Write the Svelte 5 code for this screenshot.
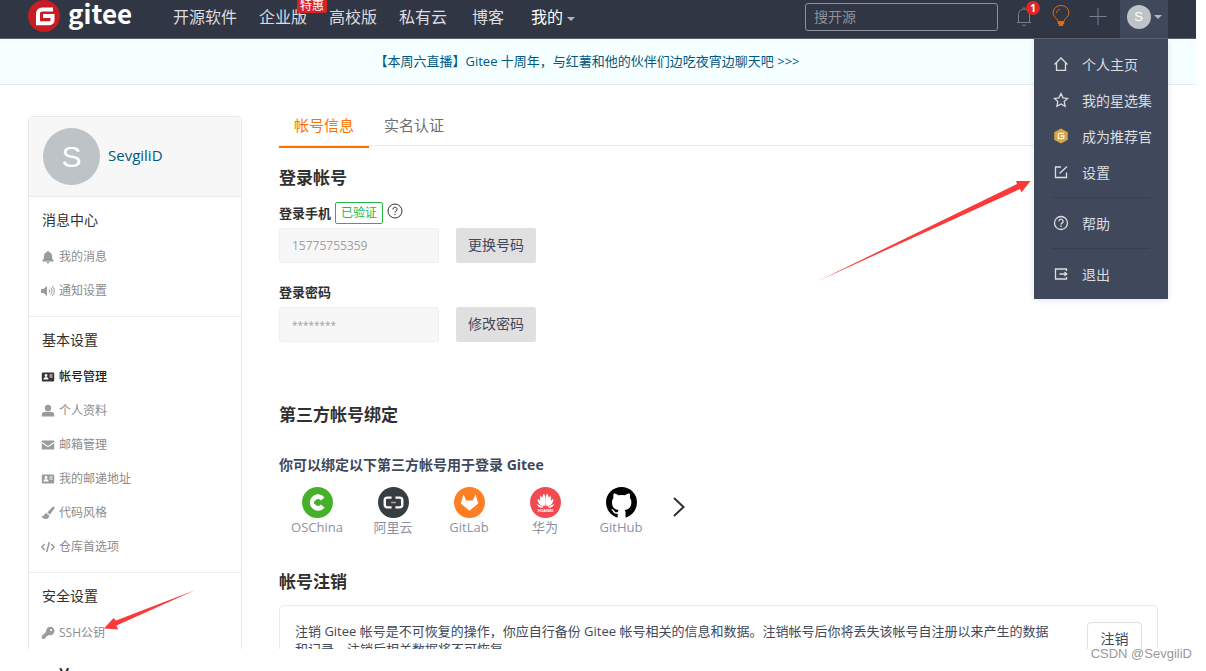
<script lang="ts">
	let keyword = $state('');
	let menuOpen = $state(true);

	const navLinks = [
		{ text: '开源软件' },
		{ text: '企业版', tag: '特惠' },
		{ text: '高校版' },
		{ text: '私有云' }
	];

	const sections = [
		{
			title: '消息中心',
			items: [
				{ icon: 'bell', text: '我的消息' },
				{ icon: 'volume', text: '通知设置' }
			]
		},
		{
			title: '基本设置',
			items: [
				{ icon: 'card', text: '帐号管理', active: true },
				{ icon: 'user', text: '个人资料' },
				{ icon: 'mail', text: '邮箱管理' },
				{ icon: 'card', text: '我的邮递地址' },
				{ icon: 'brush', text: '代码风格' },
				{ icon: 'code', text: '仓库首选项' }
			]
		},
		{
			title: '安全设置',
			items: [{ icon: 'key', text: 'SSH公钥', arrow: true }]
		}
	];

	const menuGroups = [
		[
			{ icon: 'home', text: '个人主页' },
			{ icon: 'star', text: '我的星选集' },
			{ icon: 'medal', text: '成为推荐官' },
			{ icon: 'edit', text: '设置' }
		],
		[{ icon: 'help', text: '帮助' }],
		[{ icon: 'exit', text: '退出' }]
	];

	const providers = ['OSChina', '阿里云', 'GitLab', '华为', 'GitHub'];
</script>

{#snippet sideIcon(name: string)}
	<svg class="side-icon" viewBox="0 0 14 14" aria-hidden="true">
		{#if name === 'bell'}
			<path d="M7 1c.6 0 .9.4.9.9C10 2.300 11 4 11 6c0 2.500.6 3.500 1.500 4.300.4.400.2 1.200-.5 1.200H2c-.7 0-.9-.8-.5-1.200C2.400 9.500 3 8.500 3 6c0-2 1-3.700 3.100-4.100C6.100 1.400 6.400 1 7 1zM5.500 12h3a1.500 1.500 0 0 1-3 0z" />
		{:else if name === 'volume'}
			<path d="M0 5h2.500L6 2v10L2.500 9H0z" />
			<path class="line" d="M8 5.300a2.500 2.500 0 0 1 0 3.400M9.500 3.500a5 5 0 0 1 0 7M11.200 2a7 7 0 0 1 0 10" />
		{:else if name === 'card'}
			<path fill-rule="evenodd" d="M2 2.500h10a1.200 1.200 0 0 1 1.200 1.200v6.600a1.200 1.200 0 0 1-1.200 1.200H2A1.200 1.200 0 0 1 .8 10.300V3.700A1.200 1.200 0 0 1 2 2.500zM5 4a1.400 1.400 0 1 0 0 2.900A1.400 1.400 0 0 0 5 4zM2.500 9.500h5c0-1.600-.8-2.200-2.500-2.200s-2.500.6-2.500 2.200zM8.500 4.500v1h3v-1zM8.500 6.500v1h3v-1z" />
		{:else if name === 'user'}
			<circle cx="7" cy="4" r="3.200" />
			<path d="M.8 12.500V11c0-2 1.300-3.200 3.400-3.200h5.600c2.100 0 3.400 1.200 3.400 3.200v1.500z" />
		{:else if name === 'mail'}
			<path d="M.8 2.500h12.400v1.300L7 8 .8 3.800z" />
			<path d="M.8 5.200 7 9.300l6.200-4.100v6.300H.8z" />
		{:else if name === 'brush'}
			<path d="M13.200.8c.7.6.3 1.500-.1 2.200L9 8.500 6.300 6.400 11.200 1.200c.6-.6 1.400-.9 2-.4zM5.500 7.200l2.700 2.200c.2 2.200-1.200 3.600-3.600 3.600C2 13 .8 11.500.8 9.500c1 .8 1.800.7 2.300-.5.500-1.200 1.300-1.800 2.400-1.800z" />
		{:else if name === 'code'}
			<path class="line thick" d="M3.800 4 .8 7l3 3M10.200 4l3 3-3 3M8.300 2 5.700 12" />
		{:else}
			<path fill-rule="evenodd" d="M9 .8a4.200 4.200 0 1 1-1.300 8.100L6.600 10H5.400v1.200H4.200v1.500H.8V10l4.300-4.300A4.200 4.200 0 0 1 9 .8zM10 3a1.100 1.100 0 1 0 0 2.200A1.100 1.100 0 0 0 10 3z" />
		{/if}
	</svg>
{/snippet}

{#snippet menuIcon(name: string)}
	<svg class="menu-icon" viewBox="0 0 16 16" aria-hidden="true">
		{#if name === 'home'}
			<path d="M1.500 8.500 8 2l6.500 6.500M3.500 7v7.300h9V7" />
		{:else if name === 'star'}
			<path d="M8 1.500l2 4.300 4.700.6-3.500 3.200.9 4.700L8 12l-4.100 2.300.9-4.700L1.300 6.400 6 5.800z" />
		{:else if name === 'medal'}
			<path class="gold" d="M8 .5 14.800 4.200v7.600L8 15.500 1.200 11.800V4.200z" />
			<path class="pale" d="M11 5.300H6.300a1 1 0 0 0-1 1v4.400h4.500a1 1 0 0 0 1-1V8H7.500" />
		{:else if name === 'edit'}
			<path d="M8 3H2.500v10.500h11V8.500M6.500 9.500l7.500-7" />
		{:else if name === 'help'}
			<circle cx="8" cy="8" r="6.500" />
			<path d="M5.900 6.300a2.100 2.100 0 1 1 3.200 1.800c-.8.500-1.100.8-1.100 1.500M8 10.600v1.400" />
		{:else}
			<path d="M13.500 5V3h-11v10h11v-2M6.500 8h7M11.500 6 13.800 8l-2.300 2" />
		{/if}
	</svg>
{/snippet}

<div class="page">
	<div class="frame">
		<header>
			<a class="brand" href="#home">
				<svg viewBox="0 0 32 32" aria-hidden="true">
					<circle cx="16" cy="16" r="16" />
					<path d="M25 9.500H14A4 4 0 0 0 10 13.500V23.300h11.500a3 3 0 0 0 3-3V16H15" />
				</svg>
				<span>gitee</span>
			</a>
			<nav class="main-nav">
				{#each navLinks as link}
					<a href="#nav">
						{link.text}
						{#if link.tag}<span class="tag">{link.tag}</span>{/if}
					</a>
				{/each}
				<a class="blog" href="#blog">博客</a>
				<a class="mine" href="#mine">我的<i class="caret"></i></a>
			</nav>
			<input class="search" type="text" placeholder="搜开源" aria-label="搜开源" bind:value={keyword} />
			<div class="tools">
				<button class="tool" aria-label="通知">
					<svg viewBox="0 0 20 22" aria-hidden="true">
						<path d="M3 17.500h14M4.500 17V9.500a5.500 5.500 0 0 1 11 0V17M8 19.500c.7 1.300 3.300 1.300 4 0M10 2v2" />
					</svg>
					<span class="count">1</span>
				</button>
				<button class="tool bulb" aria-label="动态">
					<svg viewBox="0 0 20 22" aria-hidden="true">
						<path d="M7 16.500c0-2.500-5-4.500-5-8.700a8 7.300 0 0 1 16 0c0 4.200-5 6.200-5 8.700zM5.500 8c0-2 1.500-3.500 3.500-3.700" />
						<path class="base" d="M6.800 18h6.400M7.800 20h4.400" />
					</svg>
				</button>
				<button class="tool" aria-label="新建">
					<svg viewBox="0 0 20 22" aria-hidden="true"><path d="M10 3v17M1.500 11.500h17" /></svg>
				</button>
			</div>
			<div class="account">
				<button class="account-button" aria-label="帐号菜单" onclick={() => (menuOpen = !menuOpen)}>
					<span class="avatar small">S</span>
					<i class="caret"></i>
				</button>
				{#if menuOpen}
					<div class="menu">
						{#each menuGroups as group, i}
							{#if i > 0}<hr />{/if}
							{#each group as item}
								<a href="#menu">{@render menuIcon(item.icon)}{item.text}</a>
							{/each}
						{/each}
						<svg class="arrow menu-arrow" viewBox="0 0 217 102" aria-hidden="true">
							<path d="M0 101.500 200 4 199 1h14.500l-9 11.500-1.500-3.500z" />
						</svg>
					</div>
				{/if}
			</div>
		</header>

		<div class="notice">
			<a href="#live">【本周六直播】Gitee 十周年，与红薯和他的伙伴们边吃夜宵边聊天吧 &gt;&gt;&gt;</a>
		</div>

		<div class="content">
			<aside>
				<div class="profile">
					<span class="avatar">S</span>
					<a href="#profile">SevgiliD</a>
				</div>
				{#each sections as section}
					<section>
						<h3>{section.title}</h3>
						{#each section.items as item}
							<a class="side-link" class:active={item.active} href="#side">
								{@render sideIcon(item.icon)}
								{item.text}
								{#if item.arrow}
									<svg class="arrow side-arrow" viewBox="0 0 92 40" aria-hidden="true">
										<path d="M91.500 0 12 30.500 9.500 28 0 38.500l14 1-1.500-4z" />
									</svg>
								{/if}
							</a>
						{/each}
					</section>
				{/each}
			</aside>

			<main>
				<nav class="tabs">
					<a class="active" href="#info">帐号信息</a>
					<a href="#realname">实名认证</a>
				</nav>

				<h2>登录帐号</h2>
				<div class="label-row">
					<label for="phone">登录手机</label>
					<span class="verified">已验证</span>
					<svg class="hint" viewBox="0 0 16 16" aria-hidden="true">
						<circle cx="8" cy="8" r="7" />
						<path d="M5.900 6.400a2.100 2.100 0 1 1 3.200 1.700c-.8.500-1.100.8-1.100 1.500M8 10.700v1.400" />
					</svg>
				</div>
				<div class="field">
					<input id="phone" type="text" value="15775755359" disabled />
					<button>更换号码</button>
				</div>
				<div class="label-row">
					<label for="password">登录密码</label>
				</div>
				<div class="field">
					<input id="password" class="masked" type="text" value="********" disabled />
					<button>修改密码</button>
				</div>

				<h2 class="bind-title">第三方帐号绑定</h2>
				<p class="bind-tip">你可以绑定以下第三方帐号用于登录 Gitee</p>
				<div class="providers">
					{#each providers as name, i}
						<a href="#bind">
							<svg viewBox="0 0 32 32" aria-hidden="true">
								{#if i === 0}
									<circle cx="16" cy="16" r="16" fill="#46b02b" />
									<path d="M21.300 12.300a6 6 0 1 0 0 7.400" fill="none" stroke="#fff" stroke-width="5" />
									<path d="M12.500 16h7" stroke="#46b02b" stroke-width="3" />
								{:else if i === 1}
									<circle cx="16" cy="16" r="16" fill="#373d41" />
									<path d="M14 11H9.500A2.500 2.500 0 0 0 7 13.500v5A2.500 2.500 0 0 0 9.500 21H14M18 11h4.500a2.500 2.500 0 0 1 2.500 2.500v5a2.500 2.500 0 0 1-2.500 2.500H18" fill="none" stroke="#fff" stroke-width="2.500" />
									<path d="M13.500 16h5" stroke="#aaa" stroke-width="1.500" />
								{:else if i === 2}
									<circle cx="16" cy="16" r="16" fill="#fd7e23" />
									<path d="M9.800 7.500 12.500 14h7l2.700-6.500L25 17 16 24.500 7 17z" fill="#fff" />
								{:else if i === 3}
									<circle cx="16" cy="16" r="16" fill="#ef4b51" />
									<g fill="#fff">
										<path d="M15.700 20c-3-4.500-4.200-9.500-1.500-13 1.700 1 2 6 1.500 13zM16.300 20c3-4.500 4.200-9.500 1.500-13-1.700 1-2 6-1.500 13zM14.800 20.200C10.500 16 9.500 12.500 11 8.800c2.200 2.700 3.300 6.500 3.800 11.400zM17.200 20.200c4.300-4.200 5.300-7.700 3.800-11.400-2.200 2.700-3.300 6.500-3.800 11.400zM14 20.600c-4.500-2.300-6.500-5-6-8.600 3 2 5 4.800 6 8.600zM18 20.600c4.500-2.300 6.500-5 6-8.600-3 2-5 4.800-6 8.600zM13.500 21.200c-3 .7-5.500-.7-6.500-3.700 2.500.8 4.700 2 6.500 3.700zM18.500 21.200c3 .7 5.500-.7 6.500-3.700-2.500.8-4.700 2-6.500 3.700z" />
										<text x="16" y="25.500" text-anchor="middle">HUAWEI</text>
									</g>
								{:else}
									<circle cx="16" cy="16" r="16" fill="#000" />
									<path d="M12 32v-4.500c-3.500.8-4.500-1.500-5-2.500-.4-.8-1-1.300-1.700-1.800 2-.6 3 1 3.700 2 1 1.300 2 1 3.200.6.100-1 .5-1.600 1-2C9.500 23.300 6.200 21.800 6.200 15.700c0-1.700.6-3.200 1.600-4.300-.2-.6-.7-2.200.2-4.600 0 0 1.500-.4 4.700 1.800a15 15 0 0 1 7 0c3.200-2.200 4.700-1.800 4.700-1.800.9 2.400.4 4 .2 4.600 1 1.100 1.600 2.600 1.600 4.300 0 6.100-3.500 7.600-7 8.100.6.500 1 1.400 1 2.700V32z" fill="#fff" />
								{/if}
							</svg>
							{name}
						</a>
					{/each}
					<button class="next" aria-label="更多">
						<svg viewBox="0 0 12 20" aria-hidden="true"><path d="M1 1l9.500 9L1 19" /></svg>
					</button>
				</div>

				<h2 class="cancel-title">帐号注销</h2>
				<div class="cancel-box">
					<p>注销 Gitee 帐号是不可恢复的操作，你应自行备份 Gitee 帐号相关的信息和数据。注销帐号后你将丢失该帐号自注册以来产生的数据和记录，注销后相关数据将不可恢复。</p>
					<button>注销</button>
				</div>
			</main>
		</div>
	</div>
	<p class="below">并</p>
	<span class="watermark">CSDN @SevgiliD</span>
</div>

<style>
	:global(body) {
		margin: 0;
		background: #fff;
	}

	.page {
		position: relative;
		height: 100vh;
		overflow: hidden;
		font-family: 'Open Sans', 'Noto Sans CJK SC', sans-serif;
		font-size: 14px;
		color: #40485b;
	}

	.frame {
		height: calc(100vh - 22px);
		margin-right: 10px;
		overflow: hidden;
	}

	a {
		color: inherit;
		text-decoration: none;
	}

	h2,
	h3,
	p {
		margin: 0;
	}

	button,
	input {
		font-family: inherit;
		box-sizing: border-box;
	}

	button {
		cursor: pointer;
	}

	header {
		display: flex;
		align-items: center;
		height: 38px;
		padding: 0 28px;
		background: #303643;
		border-bottom: 1px solid #5d6270;
	}

	.brand {
		display: flex;
		align-items: center;
		gap: 8px;
		width: 145px;
		height: 32px;
		margin-bottom: 6px;
		color: #fff;
		font-family: 'Noto Sans CJK SC', sans-serif;
		font-size: 26px;
		font-weight: 700;
		line-height: 26px;
	}

	.brand span {
		padding-bottom: 6px;
	}

	.brand svg {
		width: 32px;
		height: 32px;
		fill: #c71d23;
	}

	.brand path {
		fill: none;
		stroke: #fff;
		stroke-width: 4;
	}

	.main-nav {
		display: flex;
		gap: 22px;
		padding-bottom: 4px;
		font-size: 16px;
		line-height: 24px;
		color: #dcdde0;
	}

	.main-nav a {
		position: relative;
		white-space: nowrap;
	}

	.main-nav .blog {
		margin-left: 3px;
	}

	.main-nav .mine {
		margin-left: 5px;
		color: #fff;
	}

	.tag {
		position: absolute;
		top: -6px;
		right: -20px;
		padding: 0 3px;
		border-radius: 2px;
		background: #d8232a;
		color: #fff;
		font-size: 12px;
		line-height: 14px;
	}

	.caret {
		display: inline-block;
		border: 4px solid transparent;
		border-top-color: #b3b6be;
		border-bottom: 0;
		vertical-align: middle;
	}

	.mine .caret {
		margin-left: 4px;
	}

	.search {
		width: 193px;
		height: 28px;
		margin: 0 14px 5px auto;
		padding: 0 8px;
		border: 1px solid #8e929b;
		border-radius: 3px;
		background: transparent;
		color: #fff;
		font-size: 14px;
	}

	.search::placeholder {
		color: #8e929b;
	}

	.tools {
		display: flex;
		gap: 13px;
		margin: 0 10px 5px 0;
	}

	.tool {
		position: relative;
		width: 24px;
		height: 24px;
		padding: 0 2px;
		border: 0;
		background: none;
	}

	.tool svg {
		width: 20px;
		height: 22px;
		fill: none;
		stroke: #767e90;
		stroke-width: 1;
	}

	.tool.bulb svg {
		stroke: #e36c0a;
	}

	.bulb .base {
		stroke-width: 2;
	}

	.count {
		position: absolute;
		top: -4px;
		right: -4px;
		width: 14px;
		border-radius: 50%;
		background: #db2828;
		color: #fff;
		font-size: 10px;
		font-weight: 700;
		line-height: 14px;
	}

	.account {
		position: relative;
		height: 38px;
	}

	.account-button {
		display: flex;
		align-items: center;
		justify-content: center;
		gap: 3px;
		width: 48px;
		height: 38px;
		padding: 0 0 4px;
		border: 0;
		background: #40485b;
	}

	.avatar {
		display: inline-block;
		width: 57px;
		border-radius: 50%;
		background: #bdc3c7;
		color: #fff;
		font-family: 'Liberation Sans', sans-serif;
		font-size: 30px;
		line-height: 57px;
		text-align: center;
	}

	.avatar.small {
		width: 24px;
		font-size: 13px;
		line-height: 24px;
	}

	.menu {
		position: absolute;
		top: 39px;
		right: 0;
		z-index: 1;
		box-sizing: border-box;
		width: 134px;
		padding: 7px 0;
		background: #40485b;
		box-shadow: 0 1px 6px rgba(64, 72, 91, 0.15);
		color: #dcdde0;
	}

	.menu a {
		display: flex;
		align-items: center;
		gap: 13px;
		height: 36px;
		padding-left: 19px;
		white-space: nowrap;
	}

	.menu hr {
		margin: 7px 18px;
		border: 0;
		border-top: 1px solid #383f4f;
	}

	.menu-icon {
		width: 16px;
		height: 16px;
		fill: none;
		stroke: #dcdde0;
		stroke-width: 1.300;
	}

	.menu-icon .gold {
		fill: #d6a549;
		stroke: none;
	}

	.menu-icon .pale {
		stroke: #fff3d0;
	}

	.arrow {
		position: absolute;
		fill: #fb3a3a;
	}

	.menu-arrow {
		top: 141px;
		right: 100%;
		width: 217px;
		height: 102px;
	}

	.side-arrow {
		left: 62px;
		bottom: 20px;
		width: 92px;
		height: 40px;
	}

	.notice {
		padding-right: 22px;
		background: #f6ffff;
		border-bottom: 1px solid #e3edf3;
		color: #005980;
		font-size: 13px;
		line-height: 45px;
		text-align: center;
	}

	.content {
		display: grid;
		grid-template-columns: 214px 1fr;
		gap: 37px;
		padding: 31px 28px 0;
	}

	aside {
		box-sizing: border-box;
		border: 1px solid #e7eaed;
		border-radius: 4px 4px 0 0;
	}

	.profile {
		display: flex;
		align-items: center;
		gap: 8px;
		height: 79px;
		padding-left: 14px;
		background: #f7f7f7;
		border-bottom: 1px solid #e7eaed;
		color: #005980;
		font-size: 15px;
	}

	.profile a {
		padding-bottom: 4px;
	}

	aside section {
		padding: 5px 13px 8px;
	}

	aside section + section {
		border-top: 1px solid #ececec;
	}

	h3 {
		margin-bottom: 2px;
		color: #303030;
		font-size: 14px;
		font-weight: 400;
		line-height: 36px;
	}

	.side-link {
		position: relative;
		display: flex;
		align-items: center;
		gap: 4px;
		color: #8c8c8c;
		font-size: 12px;
		line-height: 34px;
	}

	.side-link.active {
		color: #222;
		font-weight: 500;
	}

	.side-icon {
		width: 14px;
		height: 14px;
		margin-left: -1px;
		fill: #9b9b9b;
	}

	.active .side-icon {
		fill: #333;
	}

	.side-icon .line {
		fill: none;
		stroke: #9b9b9b;
		stroke-width: 1;
	}

	.side-icon .thick {
		stroke-width: 1.500;
	}

	.tabs {
		display: flex;
		border-bottom: 1px solid #ebebeb;
		color: #6e6e6e;
		font-size: 15px;
		line-height: 18px;
	}

	.tabs a {
		padding: 0 15px 12px;
		margin-bottom: -3px;
		border-bottom: 2px solid transparent;
	}

	.tabs .active {
		border-color: #fe7300;
		color: #fe7300;
	}

	h2 {
		margin: 20px 0 12px;
		color: #303030;
		font-size: 17px;
		font-weight: 700;
		line-height: 24px;
	}

	.label-row {
		display: flex;
		align-items: center;
		gap: 4px;
		height: 21px;
		margin-bottom: 5px;
		color: #303030;
		font-size: 13px;
		font-weight: 700;
	}

	.verified {
		padding: 0 5px;
		border: 1px solid #21ba45;
		border-radius: 2px;
		color: #21ba45;
		font-size: 12px;
		font-weight: 400;
		line-height: 20px;
	}

	.hint {
		width: 16px;
		height: 16px;
		padding-bottom: 4px;
		fill: none;
		stroke: #333;
		stroke-width: 1;
	}

	.field {
		display: flex;
		gap: 17px;
		margin-bottom: 18px;
	}

	.field input {
		width: 160px;
		height: 35px;
		padding: 0 12px;
		border: 1px solid #efefef;
		border-radius: 3px;
		background: #f7f7f7;
		color: #a0a0a0;
		font-size: 12px;
	}

	.field .masked {
		font-size: 10px;
	}

	.field button {
		width: 80px;
		height: 35px;
		padding: 0 0 3px;
		border: 0;
		border-radius: 2px;
		background: #e0e0e0;
		color: #40485b;
		font-size: 14px;
	}

	.bind-title {
		margin: 61px 0 28px;
	}

	.bind-tip {
		font-size: 14px;
		font-weight: 700;
		line-height: 20px;
	}

	.providers {
		display: flex;
		align-items: flex-start;
		margin-top: 12px;
		color: #8c92a4;
		font-size: 13px;
		line-height: 18px;
	}

	.providers a {
		display: flex;
		flex-direction: column;
		align-items: center;
		width: 76px;
	}

	.providers a svg {
		width: 31px;
		height: 31px;
	}

	.providers text {
		font-family: 'Liberation Sans', sans-serif;
		font-size: 4px;
		font-weight: 700;
	}

	.next {
		width: 12px;
		height: 20px;
		margin: 10px 14px;
		padding: 0;
		border: 0;
		background: none;
	}

	.next svg {
		display: block;
		width: 12px;
		height: 20px;
		fill: none;
		stroke: #303030;
		stroke-width: 2;
	}

	.cancel-title {
		margin: 34px 0 11px;
	}

	.cancel-box {
		display: flex;
		align-items: flex-start;
		gap: 28px;
		margin-right: 10px;
		padding: 16px 15px;
		border: 1px solid #ebebeb;
		border-radius: 4px;
	}

	.cancel-box p {
		flex: 1;
		font-size: 13px;
		line-height: 18px;
	}

	.cancel-box button {
		width: 55px;
		height: 35px;
		padding: 0 0 3px;
		border: 1px solid #e0e0e0;
		border-radius: 4px;
		background: #fff;
		color: #40485b;
		font-size: 14px;
	}

	.below {
		padding: 15px 56px 0;
		color: #222;
		font-size: 16px;
		font-weight: 700;
		line-height: 24px;
	}

	.watermark {
		position: absolute;
		right: 14px;
		bottom: 8px;
		color: #999;
		font-family: 'Liberation Sans', sans-serif;
		font-size: 13px;
		line-height: 18px;
	}
</style>
